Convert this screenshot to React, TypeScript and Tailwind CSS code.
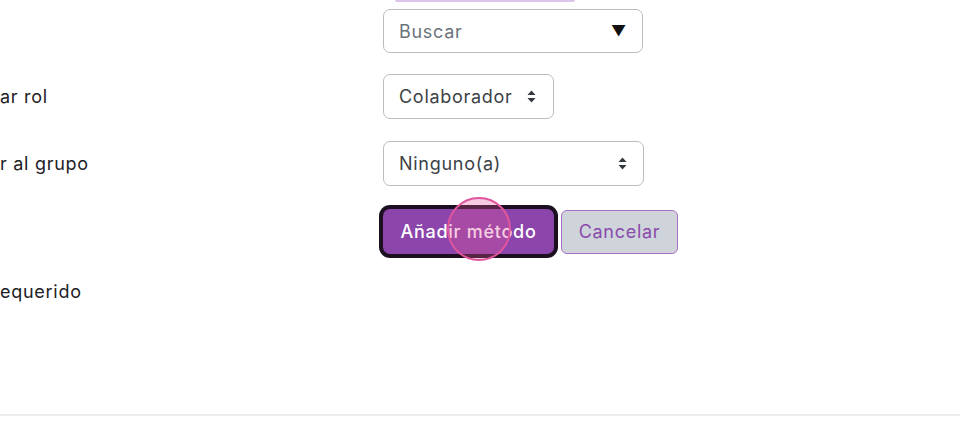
import React from "react";

const Updown = () => (
  <svg width="9" height="13" viewBox="0 0 9 13" className="shrink-0">
    <path d="M4.5 0.5 L8.5 5 L0.5 5 Z" fill="#343a40" />
    <path d="M4.5 12.5 L8.5 8 L0.5 8 Z" fill="#343a40" />
  </svg>
);

const App: React.FC = () => {
  return (
    <div
      className="w-[960px] h-[434px] overflow-hidden bg-white text-[#1d2125] text-[18px] tracking-[0.04em]"
      style={{ fontFamily: "Inter, 'Open Sans', sans-serif" }}
    >
      {/* tail of something above the fold */}
      <div className="ml-[395px] w-[180px] h-[2px] bg-[#ddc4ea] rounded-b" />

      <div className="grid grid-cols-[383px_1fr]">
        {/* Buscar */}
        <div />
        <div className="mt-[7px] h-[44px] w-[260px] flex items-center justify-between pl-[15px] pr-[15px] border border-[#b9bdc2] rounded-[7px] text-[#6a737b]">
          <span>Buscar</span>
          <span className="text-[#111] text-[15px]">▼</span>
        </div>

        {/* Asignar rol */}
        <div className="mt-[21px] h-[45px] flex items-center">ar rol</div>
        <div className="mt-[21px] h-[45px] w-[171px] flex items-center gap-[14px] pl-[15px] border border-[#b9bdc2] rounded-[7px] text-[#3c4246]">
          <span>Colaborador</span>
          <Updown />
        </div>

        {/* Añadir al grupo */}
        <div className="mt-[22px] h-[45px] flex items-center">r al grupo</div>
        <div className="mt-[22px] h-[45px] w-[261px] flex items-center justify-between pl-[15px] pr-[16px] border border-[#b9bdc2] rounded-[7px] text-[#3c4246]">
          <span>Ninguno(a)</span>
          <Updown />
        </div>

        {/* Buttons */}
        <div />
        <div className="mt-[23px] flex items-center gap-[7px]">
          <div className="relative">
            <button className="h-[45px] w-[171px] rounded-[7px] bg-[#8b45ab] text-white font-medium tracking-[0.04em] shadow-[0_0_0_4px_#1c1020]">
              Añadir método
            </button>
            <span className="absolute left-[64px] top-[-12px] w-[64px] h-[64px] rounded-full border-2 border-[#e0559c] bg-[#e6559a]/30 pointer-events-none" />
          </div>
          <button className="h-[44px] w-[117px] rounded-[6px] bg-[#ced4da] border border-[#a76fc4] text-[#8a4aab]">
            Cancelar
          </button>
        </div>

        {/* Required note */}
        <div className="mt-[25px] h-[24px] flex items-center">equerido</div>
        <div />
      </div>

      <div className="mt-[111px] h-[2px] bg-[#ececec]" />
    </div>
  );
};

export default App;
